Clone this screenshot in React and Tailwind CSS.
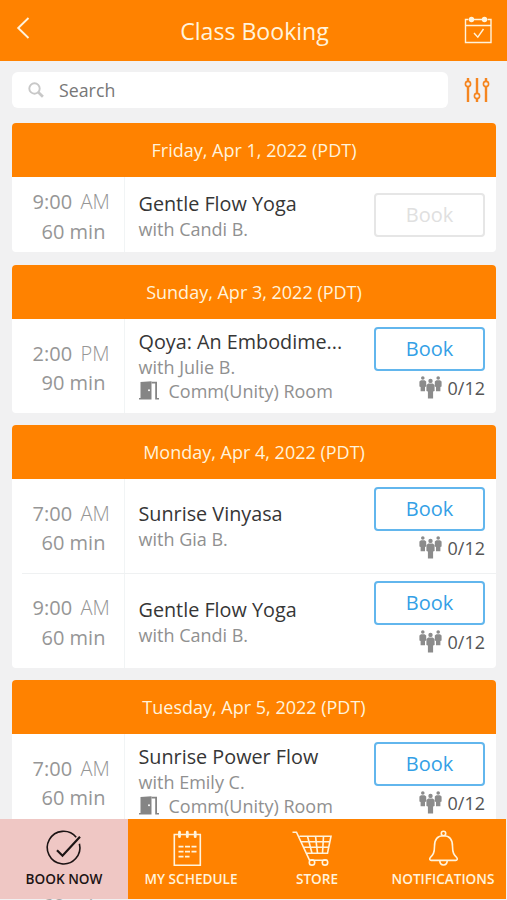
const DAYS = [
  {
    label: "Friday, Apr 1, 2022 (PDT)",
    classes: [
      { time: "9:00", period: "AM", length: "60 min", name: "Gentle Flow Yoga", teacher: "Candi B.", closed: true, height: "h-[75px]" },
    ],
  },
  {
    label: "Sunday, Apr 3, 2022 (PDT)",
    classes: [
      { time: "2:00", period: "PM", length: "90 min", name: "Qoya: An Embodime...", teacher: "Julie B.", room: "Comm(Unity) Room", spots: "0/12", height: "h-[94px]" },
    ],
  },
  {
    label: "Monday, Apr 4, 2022 (PDT)",
    classes: [
      { time: "7:00", period: "AM", length: "60 min", name: "Sunrise Vinyasa", teacher: "Gia B.", spots: "0/12", height: "h-[94px]" },
      { time: "9:00", period: "AM", length: "60 min", name: "Gentle Flow Yoga", teacher: "Candi B.", spots: "0/12", height: "h-[95px]" },
    ],
  },
  {
    label: "Tuesday, Apr 5, 2022 (PDT)",
    classes: [
      { time: "7:00", period: "AM", length: "60 min", name: "Sunrise Power Flow", teacher: "Emily C.", room: "Comm(Unity) Room", spots: "0/12", height: "h-[94px]" },
    ],
  },
];

function PeopleIcon() {
  return (
    <svg className="w-[23px] h-[23px]" viewBox="0 0 23 23" fill="#8b8b8b">
      <circle cx="3.8" cy="2" r="1.8" />
      <path d="M2 4.200h3.600L7.200 5.600v4.800l-1.200.6v4.300H1.600V11L.4 10.400V5.600z" />
      <circle cx="19.200" cy="2" r="1.800" />
      <path d="M17.400 4.200h3.600l1.600 1.400v4.800l-1.200.6v4.300H17V11l-1.200-.6V5.600z" />
      <circle cx="11.500" cy="4.900" r="2.200" />
      <path d="M9.300 7.500h4.400l1.900 1.500v6l-1.500.6v6.900H8.900v-6.900L7.400 15V9z" />
    </svg>
  );
}

function DoorIcon() {
  return (
    <svg className="w-5 h-[19px] mr-[10px]" viewBox="0 0 20 19" fill="#858585">
      <path d="M1.500 1 12.500.3V18.500H0v-1.500h1.500z" />
      <path d="M12.500.8h5.500v16.200h2v1.500h-3.800V2.500h-3.700z" />
      <circle cx="10" cy="9.300" r="1" fill="#fff" />
    </svg>
  );
}

function ClassRow({ item, divided }) {
  return (
    <div className={`flex relative ${item.height}`}>
      {divided && <span className="absolute left-[10px] right-0 top-0 h-px bg-[#eff1f2]" />}
      <div className="w-[113px] shrink-0 border-r border-[#f1f4f5] flex flex-col justify-center pt-1 text-[20px] leading-[29.5px] text-[#969696]">
        <div className="flex pl-[20.5px]">
          <span className="w-12">{item.time}</span>
          <span className="font-light">{item.period}</span>
        </div>
        <p className="pl-[29.5px]">{item.length}</p>
      </div>
      <div
        className={`w-[236px] shrink-0 pl-[13.5px] flex flex-col justify-center whitespace-nowrap ${
          item.closed || divided ? "pt-[2px]" : "pb-px"
        }`}
      >
        <p className="text-[19.8px] leading-[26px] text-[#363636]">{item.name}</p>
        <p className="text-[18px] leading-6 text-[#909090]">with {item.teacher}</p>
        {item.room && (
          <p className="flex items-center text-[18px] leading-6 text-[#909090]">
            <DoorIcon />
            {item.room}
          </p>
        )}
      </div>
      <div className={`flex flex-col items-end grow pr-[11px] ${item.closed ? "pt-4" : "pt-[7.5px]"}`}>
        <button
          className={`w-[111px] h-[44px] shrink-0 rounded-[4px] border-2 text-[20px] ${
            item.closed ? "border-[#e6e6e6] text-[#e0e0e0]" : "border-[#62b6ed] text-[#349fe6]"
          }`}
        >
          Book
        </button>
        {item.spots && (
          <div className="flex items-center gap-[6px] mt-[5px] text-[18px] leading-6 text-[#555]">
            <PeopleIcon />
            {item.spots}
          </div>
        )}
      </div>
    </div>
  );
}

function NavItem({ label, active, width, children }) {
  return (
    <div
      className={`${width} flex flex-col items-center pt-[10px] text-[13.6px] font-semibold whitespace-nowrap ${
        active ? "bg-[#efc7c4] text-[#1c1414]" : "text-[#fff3dc]"
      }`}
    >
      <svg className="w-[42px] h-10 overflow-visible" viewBox="0 -0.7 42 40" fill="none" stroke="currentColor" strokeWidth="1.600">
        {children}
      </svg>
      <p className="leading-5">{label}</p>
    </div>
  );
}

export default function App() {
  return (
    <div className="w-[507px] h-[900px] overflow-hidden bg-[#f1f1f2] font-['Open_Sans','Noto_Sans',sans-serif] relative">
      <header className="h-[61px] bg-[#ff8200] flex items-center justify-between pl-4 pr-[14px] text-[#fff3dc]">
        <svg className="w-[30px] h-6 -mt-[5px]" viewBox="0 0 30 24" fill="none" stroke="currentColor" strokeWidth="1.9">
          <path d="M12.500 2 2.200 12 12.500 22" />
        </svg>
        <h1 className="text-[23.100px] pt-[2px]">Class Booking</h1>
        <svg className="w-[30px] h-[30px] -mt-[2px]" viewBox="0 0 30 30" fill="none" stroke="currentColor" strokeWidth="1.4">
          <path d="M5.500 4.500H2.500v23h25.500v-23h-3.500M10 4.500h10M2.500 10.500h25.500M11 18l3.800 4.200 5.700-8.200" />
          <circle cx="8.500" cy="4.500" r="2" fill="currentColor" />
          <circle cx="21.500" cy="4.500" r="2" fill="currentColor" />
        </svg>
      </header>

      <div className="flex items-center pt-[11px] pl-3">
        <div className="w-[436px] h-9 bg-white rounded-md flex items-center pl-4">
          <svg className="w-4 h-4" viewBox="0 0 16 16" fill="none" stroke="#c8c8c8">
            <circle cx="6.500" cy="6.500" r="5.200" strokeWidth="1.900" />
            <path d="m10.300 10.300 4.600 4.400" strokeWidth="2.800" />
          </svg>
          <span className="pl-[15px] text-[17.8px] text-[#777]">Search</span>
        </div>
        <svg className="w-[26px] h-[26px] ml-4" viewBox="0 0 26 26" fill="none" stroke="#f5851f" strokeWidth="2.400">
          <path d="M4 1v3.500M4 9.500V25M13 1v15.500M13 21.500V25M22 1v3.500M22 9.500V25" />
          <circle cx="4" cy="7" r="2.600" strokeWidth="1.600" />
          <circle cx="13" cy="19" r="2.600" strokeWidth="1.600" />
          <circle cx="22" cy="7" r="2.600" strokeWidth="1.600" />
        </svg>
      </div>

      <main className="pl-3 pt-[15px] flex flex-col gap-3">
        {DAYS.map((day) => (
          <section key={day.label} className="w-[484px] rounded-[4px] overflow-hidden bg-white first:mb-px">
            <h2 className="h-[54px] bg-[#ff8200] text-[#fff3dc] text-[18px] flex items-center justify-center">
              {day.label}
            </h2>
            {day.classes.map((item, i) => (
              <ClassRow key={item.time} item={item} divided={i > 0} />
            ))}
          </section>
        ))}
      </main>

      <nav className="absolute left-0 bottom-[1px] w-[506px] h-[80px] bg-[#ff8200] flex">
        <NavItem label="BOOK NOW" width="w-[128px]" active>
          <path d="M33.200 7.600A16.300 16.300 0 1 0 36.400 14" />
          <path d="m14 20.500 5.500 5.500L37 7" strokeWidth="2.200" />
        </NavItem>
        <NavItem label="MY SCHEDULE" width="w-[126px]">
          <path d="M4.300 4.800h26V35.500h-26z" />
          <path d="M9.500 2.500v4.500M17.300 2.500v4.500M25.200 2.500v4.500" strokeWidth="2.800" strokeLinecap="round" />
          <path d="M8.500 17h18M8.500 22h18M8.500 27h11" strokeWidth="1.700" strokeDasharray="5 1.500" />
        </NavItem>
        <NavItem label="STORE" width="w-[126px]">
          <path d="M-3.500 2.500H.5L13.500 30.500h18M3.500 6.500h31.500l-3.500 17H11M5.500 12h28.500M8 17.500h25M11.500 6.500l4.500 17M19.500 6.500l2 17M27.500 6.500l-1 17" />
          <circle cx="16" cy="32.700" r="2.700" />
          <circle cx="29" cy="32.700" r="2.700" />
        </NavItem>
        <NavItem label="NOTIFICATIONS" width="w-[126px]">
          <circle cx="21.500" cy="3.800" r="2.200" />
          <path d="M21.500 6c-6.500 0-9 4.500-9 10.500 0 7-1.500 8.500-4.300 11.500-1 1.300-.4 2.700 1 2.700h24.600c1.400 0 2-1.400 1-2.700-2.800-3-4.300-4.500-4.300-11.500 0-6-2.500-10.500-9-10.500zM17.700 30.700c.2 3.200 1.500 4.600 3.800 4.600s3.600-1.400 3.800-4.600" />
        </NavItem>
      </nav>

      {/* top edge of the next class showing past the tab bar */}
      <div className="absolute left-0 bottom-0 w-full h-[2px] overflow-hidden opacity-60">
        <div className="flex justify-between pl-[42px] pr-[22px] -mt-[6px] text-[20px] leading-7 text-[#777]">
          <span>60 min</span>
          <span className="text-[18px] text-[#555]">0/12</span>
        </div>
      </div>
    </div>
  );
}
